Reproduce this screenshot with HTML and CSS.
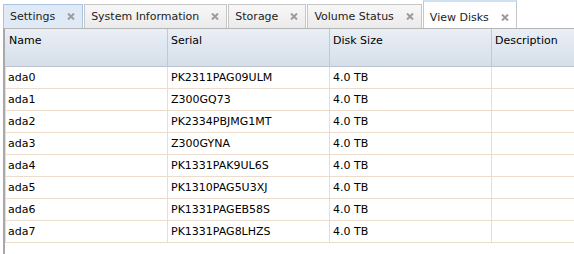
FILE: index.html
```html
<!DOCTYPE html>
<html lang="en">
<head>
  <meta charset="UTF-8">
  <title>View Disks</title>
  <link rel="stylesheet" href="styles.css">
</head>
<body>
  <div class="tab-bar">
    <div class="tab tab-hover"><span>Settings</span><svg class="tab-close" viewBox="0 0 8 7"><path d="M1 0.5L7 6.5M7 0.5L1 6.5"/></svg></div>
    <div class="tab"><span>System Information</span><svg class="tab-close" viewBox="0 0 8 7"><path d="M1 0.5L7 6.5M7 0.5L1 6.5"/></svg></div>
    <div class="tab"><span>Storage</span><svg class="tab-close" viewBox="0 0 8 7"><path d="M1 0.5L7 6.5M7 0.5L1 6.5"/></svg></div>
    <div class="tab"><span>Volume Status</span><svg class="tab-close" viewBox="0 0 8 7"><path d="M1 0.5L7 6.5M7 0.5L1 6.5"/></svg></div>
    <div class="tab tab-active"><span>View Disks</span><svg class="tab-close" viewBox="0 0 8 7"><path d="M1 0.5L7 6.5M7 0.5L1 6.5"/></svg></div>
  </div>

  <div class="panel">
    <table class="grid">
      <thead>
        <tr>
          <th class="col-name">Name</th>
          <th class="col-serial">Serial</th>
          <th class="col-size">Disk Size</th>
          <th class="col-desc">Description</th>
        </tr>
      </thead>
      <tbody>
        <tr><td>ada0</td><td>PK2311PAG09ULM</td><td>4.0 TB</td><td></td></tr>
        <tr><td>ada1</td><td>Z300GQ73</td><td>4.0 TB</td><td></td></tr>
        <tr><td>ada2</td><td>PK2334PBJMG1MT</td><td>4.0 TB</td><td></td></tr>
        <tr><td>ada3</td><td>Z300GYNA</td><td>4.0 TB</td><td></td></tr>
        <tr><td>ada4</td><td>PK1331PAK9UL6S</td><td>4.0 TB</td><td></td></tr>
        <tr><td>ada5</td><td>PK1310PAG5U3XJ</td><td>4.0 TB</td><td></td></tr>
        <tr><td>ada6</td><td>PK1331PAGEB58S</td><td>4.0 TB</td><td></td></tr>
        <tr><td>ada7</td><td>PK1331PAG8LHZS</td><td>4.0 TB</td><td></td></tr>
      </tbody>
    </table>
  </div>
</body>
</html>
```

FILE: styles.css
```css
* {
  margin: 0;
  padding: 0;
  box-sizing: border-box;
}

body {
  font-family: "DejaVu Sans", Verdana, sans-serif;
  font-size: 11px;
  color: #000;
  background: #fff;
  overflow: hidden;
  height: 100vh;
}

.tab-bar {
  display: flex;
  align-items: flex-end;
  gap: 1px;
  height: 28px;
  padding-left: 3px;
}

.tab {
  display: flex;
  align-items: center;
  gap: 12px;
  height: 24px;
  padding: 0 7px 0 6px;
  border: 1px solid #c6c6c6;
  border-bottom: none;
  background: linear-gradient(#f7f7f7, #ebebeb);
  color: #222;
  white-space: nowrap;
}

.tab-hover {
  background: #dfeaf6;
  border-color: #a9c5e2;
}

.tab-active {
  height: 28px;
  padding-top: 4px;
  background: #fff;
  border-top: 2px solid #cfe0f2;
}

.tab-close {
  width: 8px;
  height: 7px;
  stroke: #9c9c9c;
  stroke-width: 2;
  fill: none;
}

.panel {
  margin-left: 3px;
  border-left: 2px solid #a9a9a9;
  border-top: 1px solid #b4b4b4;
  height: calc(100vh - 28px);
  overflow: hidden;
}

.grid {
  border-collapse: separate;
  border-spacing: 0;
  table-layout: fixed;
  width: 649px;
}

.col-name { width: 163px; }
.col-serial { width: 162px; }
.col-size { width: 162px; }
.col-desc { width: 162px; }

.grid th {
  height: 38px;
  padding: 5px 3px 0 3px;
  text-align: left;
  vertical-align: top;
  font-weight: normal;
  background: linear-gradient(#eaeff6, #d5dee9);
  border-right: 1px solid #c2c8d0;
  border-bottom: 1px solid #b9c2cd;
}

.grid th.col-name {
  padding-left: 4px;
}

.grid td {
  height: 22px;
  padding: 0 3px;
  vertical-align: middle;
  border-right: 1px solid #ecdccc;
  border-bottom: 1px solid #ecdccc;
  white-space: nowrap;
}

.grid td:first-child {
  border-left: 1px solid #ecdccc;
  padding-left: 2px;
}
```
